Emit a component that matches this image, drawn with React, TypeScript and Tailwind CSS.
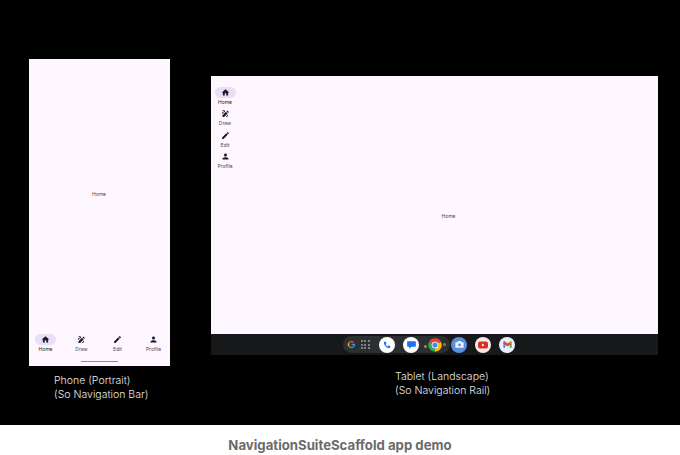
import React from 'react';
import { MdHome, MdDraw, MdEdit, MdPerson } from 'react-icons/md';

const items = [
    { label: 'Home', Icon: MdHome },
    { label: 'Draw', Icon: MdDraw },
    { label: 'Edit', Icon: MdEdit },
    { label: 'Profile', Icon: MdPerson }
];

function NavItem({ label, Icon, active }: { label: string; Icon: typeof MdHome; active: boolean }) {
    return (
        <div className="flex flex-col items-center">
            <div
                className={`flex h-[11px] w-[21px] items-center justify-center rounded-full ${
                    active ? 'bg-[#e8def8]' : ''
                }`}>
                <Icon className="h-[9px] w-[9px] text-[#1d192b]" />
            </div>
            <span className={`mt-[1px] text-[5px] leading-[7px] ${active ? 'text-[#1d1b20]' : 'text-[#49454f]'}`}>
                {label}
            </span>
        </div>
    );
}

function Dock() {
    return (
        <div className="flex h-[21px] items-center bg-[#16181a] pl-[132px]">
            <div className="flex h-[17px] w-[107px] items-center rounded-full bg-[#2c2f31] pl-[4px]">
                <svg viewBox="0 0 16 16" className="h-[9px] w-[9px] shrink-0">
                    <path d="M14.5 8.2c0-.5 0-1-.1-1.400H8v2.700h3.600c-.2.800-.6 1.500-1.300 2l2.100 1.600c1.300-1.200 2.100-2.900 2.100-4.900z" fill="#4285f4" />
                    <path d="M8 14.700c1.800 0 3.300-.6 4.400-1.600l-2.100-1.600c-.6.400-1.400.7-2.300.7-1.700 0-3.200-1.200-3.700-2.700L2.100 11.100C3.200 13.200 5.400 14.700 8 14.700z" fill="#34a853" />
                    <path d="M4.300 9.500C4.100 9 4 8.500 4 8s.1-1 .3-1.500L2.100 4.900C1.600 5.800 1.300 6.900 1.300 8s.3 2.200.8 3.100z" fill="#fbbc05" />
                    <path d="M8 3.800c1 0 1.900.3 2.600 1l1.900-1.900C11.300 1.900 9.800 1.300 8 1.300 5.400 1.300 3.200 2.800 2.100 4.900l2.200 1.600C4.800 5 6.300 3.800 8 3.800z" fill="#ea4335" />
                </svg>
                <div className="ml-[4.500px] grid shrink-0 grid-cols-3 gap-[1.500px]">
                    {Array.from({ length: 9 }).map((_, i) => (
                        <div key={i} className="h-[2px] w-[2px] rounded-full bg-[#9aa0a6]" />
                    ))}
                </div>
                <div className="ml-[9.500px] flex h-[16px] w-[16px] shrink-0 items-center justify-center rounded-full bg-white">
                    <svg viewBox="0 0 24 24" className="h-[10px] w-[10px]">
                        <path d="M6.600 3.500l3 .7 1 4.300-2 1.800c.9 2 2.500 3.800 4.700 5l2-1.900 4.200 1.100.6 3-1.500 2.500C11 20 4.500 13 4.500 5z" fill="#1a73e8" />
                    </svg>
                </div>
                <div className="ml-[8px] flex h-[16px] w-[16px] shrink-0 items-center justify-center rounded-full bg-white">
                    <svg viewBox="0 0 24 24" className="h-[11px] w-[11px]">
                        <path d="M4 5h16a1.500 1.500 0 0 1 1.500 1.500v9A1.500 1.500 0 0 1 20 17h-8l-5 4v-4H4a1.500 1.500 0 0 1-1.500-1.500v-9A1.500 1.500 0 0 1 4 5z" fill="#1a73e8" />
                    </svg>
                </div>
                {/* bits of the icon tucked behind chrome */}
                <div className="ml-[5px] mt-[4px] h-[3px] w-[3px] shrink-0 rounded-full bg-[#a8933a]" />
                <svg viewBox="0 0 24 24" className="h-[16px] w-[16px] shrink-0">
                    <path d="M12 12L3.300 7A10 10 0 0 1 20.700 7z" fill="#ea4335" />
                    <path d="M12 12l8.700-5A10 10 0 0 1 12 22z" fill="#fbbc05" />
                    <path d="M12 12v10A10 10 0 0 1 3.300 7z" fill="#34a853" />
                    <circle cx="12" cy="12" r="5" fill="#fff" />
                    <circle cx="12" cy="12" r="3.800" fill="#4285f4" />
                </svg>
                <div className="h-[3px] w-[3px] shrink-0 rounded-full bg-[#8a7f3e]" />
            </div>
            <div className="ml-[1px] flex h-[16px] w-[16px] items-center justify-center rounded-full bg-[#5a8fdc]">
                <svg viewBox="0 0 24 24" className="h-[11px] w-[11px]">
                    <path d="M3 7h4l2-2.500h6L17 7h4v12H3z" fill="#e8f0fe" />
                    <circle cx="12" cy="13" r="3" fill="#5a8fdc" />
                </svg>
            </div>
            <div className="ml-[8px] flex h-[16px] w-[16px] items-center justify-center rounded-full bg-[#fbe9e7]">
                <svg viewBox="0 0 24 24" className="h-[12px] w-[12px]">
                    <rect x="2" y="5" width="20" height="14" rx="4" fill="#d93025" />
                    <path d="M10 9l5 3-5 3z" fill="#fff" />
                </svg>
            </div>
            <div className="ml-[8px] flex h-[16px] w-[16px] items-center justify-center rounded-full bg-[#e8f0fe]">
                <svg viewBox="0 0 24 24" className="h-[11px] w-[11px]">
                    <path d="M3 6v13h4V10z" fill="#4285f4" />
                    <path d="M21 6v13h-4V10z" fill="#34a853" />
                    <path d="M3 6l2-1.500 7 5.500 7-5.500L21 6v4l-9 6.500L3 10z" fill="#ea4335" />
                    <path d="M19 4.500L21 6v4l-4 0z" fill="#fbbc05" />
                </svg>
            </div>
        </div>
    );
}

function App() {
    return (
        <div className="h-[455px] w-[680px] overflow-hidden bg-white font-['Inter',sans-serif]">
            <div className="flex h-[425px] bg-black pl-[29px]">
                {/* phone */}
                <div className="w-[141px]">
                    <div className="mt-[59px] flex h-[307px] flex-col bg-[#fef7ff]">
                        <div className="flex flex-1 items-center justify-center pb-[4px] pr-[1px]">
                            <span className="text-[5px] text-[#49454f]">Home</span>
                        </div>
                        <div className="ml-[-1.500px] flex w-[144px]">
                            {items.map((item, i) => (
                                <div key={item.label} className="flex w-[36px] justify-center">
                                    <NavItem {...item} active={i === 0} />
                                </div>
                            ))}
                        </div>
                        <div className="mx-auto mb-[4px] mt-[8px] h-[1px] w-[37px] bg-[#8d8a91]" />
                    </div>
                    <p className="ml-[25px] mt-[8px] whitespace-nowrap text-[10.500px] leading-[13.500px] font-light text-[#e8e8e8]">
                        Phone (Portrait)
                        <br />
                        (So Navigation Bar)
                    </p>
                </div>
                {/* tablet */}
                <div className="ml-[41px] w-[447px]">
                    <div className="mt-[76px] flex h-[258px] bg-[#fef7ff]">
                        <div className="flex w-[28px] flex-col items-center gap-[2.300px] pt-[11px]">
                            {items.map((item, i) => (
                                <NavItem key={item.label} {...item} active={i === 0} />
                            ))}
                        </div>
                        <div className="flex flex-1 items-center justify-center pt-[23px]">
                            <span className="text-[5px] text-[#49454f]">Home</span>
                        </div>
                    </div>
                    <Dock />
                    <p className="ml-[184px] mt-[15px] whitespace-nowrap text-[10.500px] leading-[13.500px] font-light text-[#e8e8e8]">
                        Tablet (Landscape)
                        <br />
                        (So Navigation Rail)
                    </p>
                </div>
            </div>
            <div className="flex h-[30px] justify-center pt-[12px]">
                <span className="text-[13.200px] leading-[16px] font-bold text-[#6b6b6b]">
                    NavigationSuiteScaffold app demo
                </span>
            </div>
        </div>
    );
}

export default App;
